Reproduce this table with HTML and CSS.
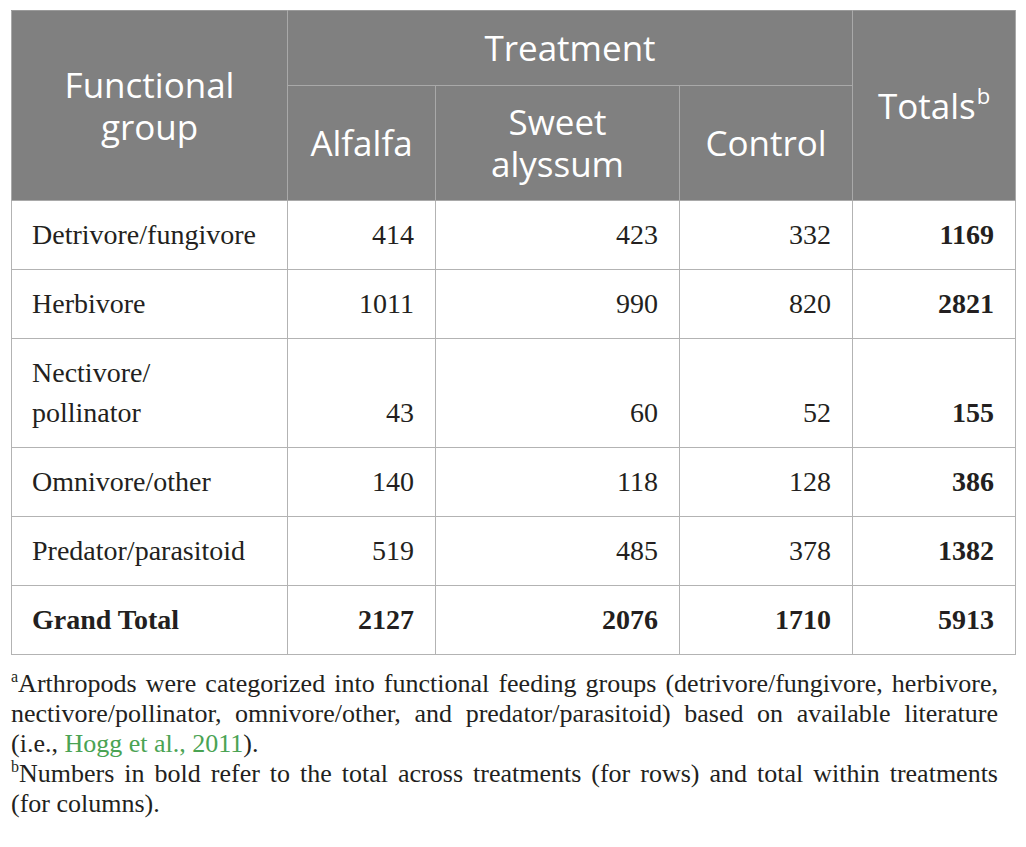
FILE: index.html
```html
<!DOCTYPE html>
<html lang="en">
<head>
<meta charset="utf-8">
<title>Arthropod functional groups</title>
<link rel="stylesheet" href="styles.css">
</head>
<body>
<div class="page">
  <table class="data">
    <colgroup>
      <col class="c-group">
      <col class="c-alfalfa">
      <col class="c-sweet">
      <col class="c-control">
      <col class="c-total">
    </colgroup>
    <thead>
      <tr class="hrow1">
        <th rowspan="2">Functional<br>group</th>
        <th colspan="3">Treatment</th>
        <th rowspan="2">Totals<sup>b</sup></th>
      </tr>
      <tr class="hrow2">
        <th>Alfalfa</th>
        <th>Sweet<br>alyssum</th>
        <th>Control</th>
      </tr>
    </thead>
    <tbody>
      <tr><td class="name">Detrivore/fungivore</td><td>414</td><td>423</td><td>332</td><td class="b">1169</td></tr>
      <tr><td class="name">Herbivore</td><td>1011</td><td>990</td><td>820</td><td class="b">2821</td></tr>
      <tr><td class="name">Nectivore/<br>pollinator</td><td>43</td><td>60</td><td>52</td><td class="b">155</td></tr>
      <tr><td class="name">Omnivore/other</td><td>140</td><td>118</td><td>128</td><td class="b">386</td></tr>
      <tr><td class="name">Predator/parasitoid</td><td>519</td><td>485</td><td>378</td><td class="b">1382</td></tr>
      <tr class="grand"><td class="name">Grand Total</td><td>2127</td><td>2076</td><td>1710</td><td>5913</td></tr>
    </tbody>
  </table>
  <div class="notes">
    <p class="note"><span class="jl"><sup>a</sup>Arthropods were categorized into functional feeding groups (detrivore/fungivore, herbivore,</span><span class="jl">nectivore/pollinator, omnivore/other, and predator/parasitoid) based on available literature</span><span class="ll">(i.e., <a href="#" class="ref">Hogg et al., 2011</a>).</span></p>
    <p class="note"><span class="jl"><sup>b</sup>Numbers in bold refer to the total across treatments (for rows) and total within treatments</span><span class="ll">(for columns).</span></p>
  </div>
</div>
</body>
</html>
```

FILE: styles.css
```css
html, body {
  margin: 0;
  padding: 0;
  background: #ffffff;
}

.page {
  padding: 10px 12px 0 11px;
  font-family: "Liberation Serif", "Times New Roman", serif;
  color: #231f20;
}

.data {
  border-collapse: collapse;
  table-layout: fixed;
  width: 1004px;
}

.c-group { width: 276px; }
.c-alfalfa { width: 148px; }
.c-sweet { width: 244px; }
.c-control { width: 173px; }
.c-total { width: 163px; }

.data th {
  background: #808080;
  color: #ffffff;
  font-family: "Open Sans", "Lato", sans-serif;
  font-weight: 400;
  font-size: 35px;
  line-height: 42px;
  text-align: center;
  vertical-align: middle;
  border: 1px solid #a9a9a9;
  padding: 15px 6px;
}

.data thead tr:first-child th {
  border-top-color: #9a9a9a;
}

.hrow1 th { padding: 16px 6px; }

.data th sup {
  font-size: 22px;
  line-height: 0;
  vertical-align: 0;
  position: relative;
  top: -15px;
  margin-left: 1px;
}

.data td {
  font-size: 28px;
  line-height: 40px;
  padding: 14px 21px 14px 20px;
  border: 1px solid #b3b3b3;
  text-align: right;
  vertical-align: bottom;
}

.data td.name {
  text-align: left;
}

.data td.b,
.grand td {
  font-weight: 700;
}

.notes {
  width: 987px;
  padding-top: 14px;
}

.note {
  margin: 0;
  font-size: 26px;
  line-height: 30px;
}

.note .jl {
  display: block;
  text-align: justify;
  text-align-last: justify;
}

.note .ll {
  display: block;
  text-align: left;
}

.note sup {
  font-size: 16px;
  line-height: 0;
  vertical-align: 0;
  position: relative;
  top: -10px;
}

.ref {
  color: #4aa353;
  text-decoration: none;
}
```
